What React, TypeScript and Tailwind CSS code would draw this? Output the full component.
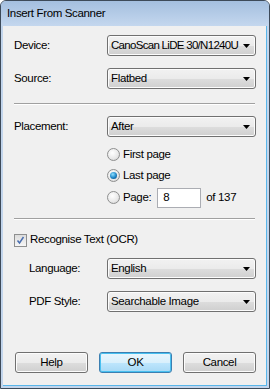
import { ReactNode } from 'react';

const font = { fontFamily: '"Segoe UI", "Liberation Sans", Arial, sans-serif' };

const Arrow = () => (
  <svg width="7" height="4" viewBox="0 0 7 4" className="shrink-0">
    <path d="M0 0h7L3.5 4z" fill="#000" />
  </svg>
);

const Combo = ({ value, tight }: { value: string; tight?: boolean }) => (
  <div className="flex items-center w-[149px] h-[21px] rounded-[3px] border border-[#707070] bg-[linear-gradient(#f2f2f2_0%,#ebebeb_50%,#dddddd_51%,#cfcfcf_100%)] pl-[3px] pr-[5px] shadow-[inset_0_0_0_1px_#fcfcfc]">
    <span className={`flex-1 whitespace-nowrap leading-none text-black ${tight ? 'tracking-[-0.7px]' : ''}`}>{value}</span>
    <Arrow />
  </div>
);

const Row = ({ label, indent, children }: { label: string; indent?: boolean; children: ReactNode }) => (
  <div className="flex items-center h-[21px]">
    <span className={`${indent ? 'pl-[26px]' : 'pl-[11px]'} w-[104px] text-black`}>{label}</span>
    {children}
  </div>
);

const Radio = ({ checked }: { checked?: boolean }) => (
  <span className="relative flex items-center justify-center w-[13px] h-[13px] rounded-full border border-[#8e8f8f] bg-[radial-gradient(circle_at_40%_35%,#ffffff_0%,#e8e8e8_60%,#c8c8c8_100%)] shrink-0">
    {checked && (
      <span className="w-[7px] h-[7px] rounded-full bg-[radial-gradient(circle_at_40%_35%,#8fe0ff_0%,#1d84c6_55%,#0b3f6e_100%)]" />
    )}
  </span>
);

const RadioRow = ({ label, checked, children }: { label: string; checked?: boolean; children?: ReactNode }) => (
  <div className="flex items-center h-[21px] pl-[104px]">
    <Radio checked={checked} />
    <span className="ml-[3px] text-black">{label}</span>
    {children}
  </div>
);

const Button = ({ label, primary }: { label: string; primary?: boolean }) => (
  <div
    className={`flex items-center justify-center w-[73px] h-[21px] rounded-[3px] border text-black ${
      primary
        ? 'border-[#3c7fb1] bg-[linear-gradient(#eaf6fd_0%,#d9f0fc_50%,#bee6fd_51%,#a7d9f5_100%)] shadow-[inset_0_0_0_1px_#48c0f0]'
        : 'border-[#707070] bg-[linear-gradient(#f2f2f2_0%,#ebebeb_50%,#dddddd_51%,#cfcfcf_100%)] shadow-[inset_0_0_0_1px_#fcfcfc]'
    }`}
  >
    {label}
  </div>
);

const Separator = () => (
  <div className="mx-[11px]">
    <div className="h-px bg-[#a0a0a0]" />
    <div className="h-px bg-white" />
  </div>
);

export default function App() {
  return (
    <div
      style={font}
      className="w-[270px] h-[389px] flex flex-col rounded-t-[6px] border border-[#3d4a59] bg-[#c2d5ec] overflow-hidden text-[11.5px] tracking-[-0.35px]"
    >
      <div className="h-[25px] flex items-center pl-[6px] bg-[linear-gradient(#a4bfdf,#c4d7ee)] text-black">
        Insert From Scanner
      </div>
      <div className="flex-1 mx-[2px] mb-[2px] flex flex-col bg-[#f0f0f0] border-r border-b border-[#59b6ea]">
        <div className="mt-[9px]">
          <Row label="Device:">
            <Combo value="CanoScan LiDE 30/N1240U" tight />
          </Row>
        </div>
        <div className="mt-[12px] mb-[14px]">
          <Row label="Source:">
            <Combo value="Flatbed" />
          </Row>
        </div>
        <Separator />
        <div className="mt-[11px]">
          <Row label="Placement:">
            <Combo value="After" />
          </Row>
        </div>
        <div className="mt-[7px]">
          <RadioRow label="First page" />
          <RadioRow label="Last page" checked />
          <div className="mt-px">
            <RadioRow label="Page:">
              <div className="ml-[6px] w-[44px] h-[20px] flex items-center pl-[5px] bg-white border border-[#abadb3] text-black">
                8
              </div>
              <span className="ml-[5px] text-black">of 137</span>
            </RadioRow>
          </div>
        </div>
        <div className="mt-[10px]">
          <Separator />
        </div>
        <div className="mt-[11px] flex items-center h-[18px] pl-[11px]">
          <span className="flex items-center justify-center w-[13px] h-[13px] border border-[#8e8f8f] bg-[linear-gradient(#dcdcdc,#f6f6f6)]">
            <svg width="9" height="9" viewBox="0 0 9 9">
              <path d="M1.5 4.5l2 2.5 4-6" fill="none" stroke="#4a6fb0" strokeWidth="1.5" />
            </svg>
          </span>
          <span className="ml-[3px] text-black">Recognise Text (OCR)</span>
        </div>
        <div className="mt-[9px]">
          <Row label="Language:" indent>
            <Combo value="English" />
          </Row>
        </div>
        <div className="mt-[12px]">
          <Row label="PDF Style:" indent>
            <Combo value="Searchable Image" />
          </Row>
        </div>
        <div className="mt-auto mb-[12px] flex gap-[11px] pl-[12px]">
          <Button label="Help" />
          <Button label="OK" primary />
          <Button label="Cancel" />
        </div>
      </div>
    </div>
  );
}
